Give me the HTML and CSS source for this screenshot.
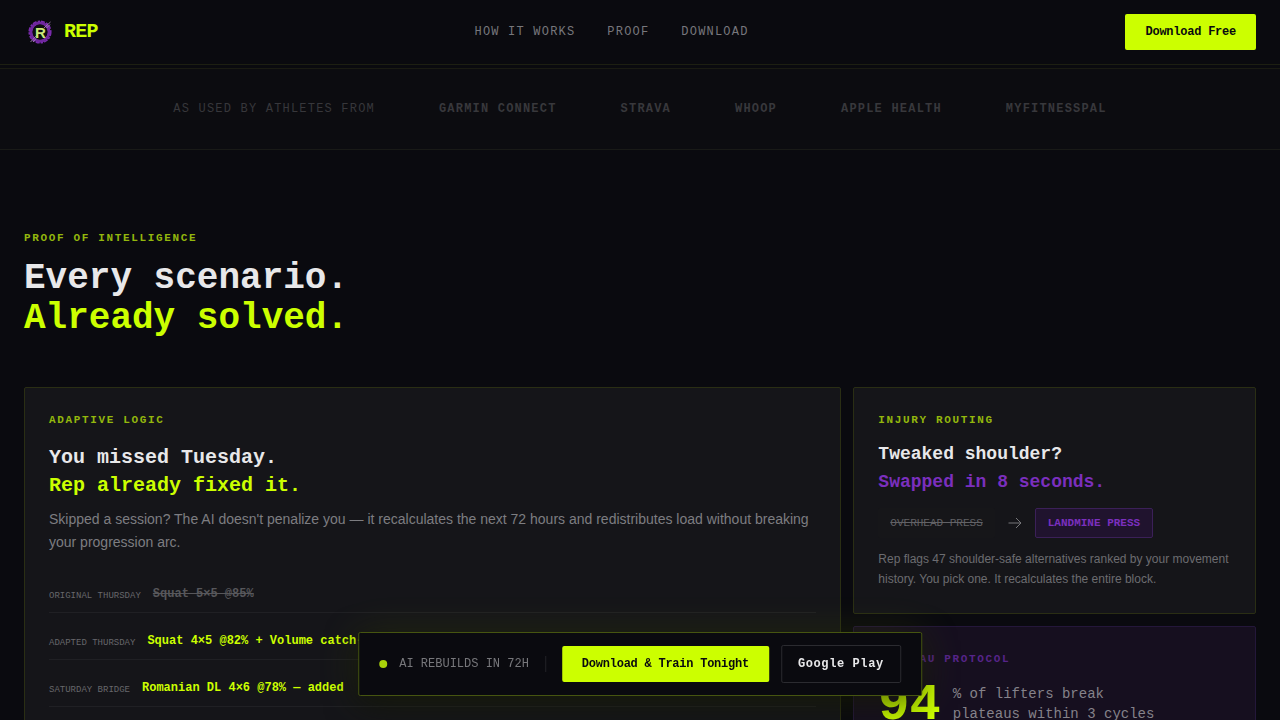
FILE: index.html
```html
<!DOCTYPE html>
<html lang="en">
<head>
<meta charset="utf-8">
<meta name="viewport" content="width=device-width, initial-scale=1">
<title>REP</title>
<link rel="stylesheet" href="styles.css">
</head>
<body>
<header class="site-header">
  <a class="brand" href="#">
    <svg class="brand-mark" viewBox="0 0 32 32" aria-hidden="true">
      <circle cx="16" cy="16" r="9" fill="none" stroke="#6f279e" stroke-width="3"/>
      <circle cx="16" cy="16" r="10.8" fill="none" stroke="#7a2bad" stroke-width="1.6" stroke-dasharray="4 1.2 2.4 1"/>
      <circle cx="16" cy="16" r="7.4" fill="#0d0d10"/>
      <path d="M6.5 26 L12.5 19.5 M20 12 L26.5 6 M9 26 L12 22.5 M22.5 12 L26 8.5" stroke="#b994c8" stroke-width="0.8"/>
      <text class="brand-letter" x="16.5" y="21.5" text-anchor="middle">R</text>
    </svg>
    <span class="brand-name">REP</span>
  </a>
  <nav class="site-nav">
    <a href="#how">HOW IT WORKS</a>
    <a href="#proof">PROOF</a>
    <a href="#download">DOWNLOAD</a>
  </nav>
  <button class="button button-primary" type="button">Download Free</button>
</header>

<main>
  <section class="partners">
    <span class="partners-label">AS USED BY ATHLETES FROM</span>
    <span>GARMIN CONNECT</span>
    <span>STRAVA</span>
    <span>WHOOP</span>
    <span>APPLE HEALTH</span>
    <span>MYFITNESSPAL</span>
  </section>

  <section class="proof" id="proof">
    <p class="eyebrow">PROOF OF INTELLIGENCE</p>
    <h2 class="headline">Every scenario.<br><span class="lime">Already solved.</span></h2>

    <div class="cards">
      <article class="card card-wide">
        <p class="eyebrow">ADAPTIVE LOGIC</p>
        <h3 class="card-title card-title-large">You missed Tuesday.<br><span class="lime">Rep already fixed it.</span></h3>
        <p class="card-text card-text-large">Skipped a session? The AI doesn't penalize you — it recalculates the next 72 hours and redistributes load without breaking your progression arc.</p>
        <dl class="plan">
          <div class="plan-row"><dt>ORIGINAL THURSDAY</dt><dd class="plan-old">Squat 5×5 @85%</dd></div>
          <div class="plan-row"><dt>ADAPTED THURSDAY</dt><dd>Squat 4×5 @82% + Volume catch-up</dd></div>
          <div class="plan-row"><dt>SATURDAY BRIDGE</dt><dd>Romanian DL 4×6 @78% — added</dd></div>
        </dl>
      </article>

      <article class="card">
        <p class="eyebrow">INJURY ROUTING</p>
        <h3 class="card-title">Tweaked shoulder?<br><span class="violet">Swapped in 8 seconds.</span></h3>
        <div class="swap">
          <span class="chip chip-old">OVERHEAD PRESS</span>
          <svg class="arrow" viewBox="0 0 16 16" aria-hidden="true"><path d="M1.5 8H14M9 3l5 5-5 5"/></svg>
          <span class="chip chip-new">LANDMINE PRESS</span>
        </div>
        <p class="card-text">Rep flags 47 shoulder-safe alternatives ranked by your movement history. You pick one. It recalculates the entire block.</p>
      </article>

      <article class="card card-violet">
        <p class="eyebrow eyebrow-violet">PLATEAU PROTOCOL</p>
        <div class="stat">
          <span class="stat-value">94</span>
          <p class="stat-text">% of lifters break plateaus within 3 cycles</p>
        </div>
      </article>
    </div>
  </section>
</main>

<aside class="cta-bar">
  <p class="cta-status">AI REBUILDS IN 72H</p>
  <button class="button button-primary" type="button">Download &amp; Train Tonight</button>
  <button class="button button-outline" type="button">Google Play</button>
</aside>
</body>
</html>
```

FILE: styles.css
```css
:root {
  --bg: #0a0a0f;
  --panel: #151519;
  --lime: #ccff00;
  --violet: #7b2fbe;
  --text: #e8e8ea;
  --mono: "Liberation Mono", monospace;
  --sans: "Liberation Sans", sans-serif;
}

* { box-sizing: border-box; }

body, p, h2, h3, dl, dd { margin: 0; }

body {
  background: var(--bg);
  color: var(--text);
  font-family: var(--mono);
  font-size: 12px;
  line-height: 16px;
}

.lime { color: var(--lime); }
.violet { color: var(--violet); }

.site-header {
  position: sticky;
  top: 0;
  z-index: 2;
  display: flex;
  align-items: center;
  justify-content: space-between;
  padding: 14px 24px;
  background: var(--bg);
  border-bottom: 1px solid #1d1f12;
}

.brand {
  display: flex;
  align-items: center;
  gap: 8px;
  color: var(--lime);
  text-decoration: none;
}

.brand-mark { width: 32px; height: 32px; }
.brand-letter { font: 700 15px var(--sans); fill: #cce87a; }

.brand-name {
  font-size: 20px;
  font-weight: 700;
  line-height: 28px;
  letter-spacing: -0.04em;
}

.site-nav { display: flex; gap: 32px; }

.site-nav a {
  color: #77777c;
  letter-spacing: 0.1em;
  text-decoration: none;
}

.button {
  padding: 10px 20px;
  border: 0;
  border-radius: 2px;
  font: 700 12px/16px var(--mono);
}

.button-primary {
  background: var(--lime);
  color: var(--bg);
  letter-spacing: -0.02em;
}

.button-outline {
  padding: 10px 16px;
  border: 1px solid #2b2b30;
  background: transparent;
  color: var(--text);
  letter-spacing: 0.05em;
}

.partners {
  display: flex;
  justify-content: center;
  gap: 64px;
  margin-top: 3px;
  padding: 32px 24px;
  background: #0c0c10;
  border-top: 1px solid #1a1b12;
  border-bottom: 1px solid #191a17;
  color: #38383c;
  font-weight: 700;
  letter-spacing: 0.1em;
}

.partners-label { color: #37373b; font-weight: 400; }

.proof { padding: 80px 24px; }

.eyebrow {
  color: #93b70d;
  font-size: 11px;
  font-weight: 700;
  letter-spacing: 0.15em;
}

.eyebrow-violet { color: #56248a; }

.headline {
  margin: 13px 0 48px;
  font-size: 36px;
  line-height: 40px;
}

.cards {
  display: grid;
  grid-template-columns: repeat(3, 1fr);
  gap: 12px;
}

.card {
  padding: 24px;
  background: var(--panel);
  border: 1px solid #2a2e14;
  border-radius: 2px;
}

.card-wide { grid-column: span 2; grid-row: span 2; }
.card-violet { background: #160f1f; border-color: #24173a; }

.card-title {
  margin: 12px 0;
  font-size: 18px;
  line-height: 28px;
}

.card-title-large {
  margin: 16px 0 8px;
  font-size: 20px;
}

.card-text {
  color: #6c6c70;
  font-family: var(--sans);
  line-height: 20px;
}

.card-text-large {
  margin-bottom: 12px;
  color: #7d7d81;
  font-size: 14px;
  line-height: 23px;
}

.plan-row {
  display: flex;
  align-items: flex-end;
  gap: 12px;
  padding: 19px 0 9px;
  border-bottom: 1px solid #202024;
  line-height: 18px;
}

.plan-row dt { color: #67676b; font-size: 9px; line-height: 14px; }
.plan-row dd { color: var(--lime); font-weight: 700; }
.plan-row .plan-old { color: #57575b; text-decoration: line-through; }

.swap {
  display: flex;
  align-items: center;
  gap: 12px;
  margin-bottom: 11px;
}

.chip {
  padding: 7px 12px;
  border-radius: 2px;
  font-size: 11px;
}

.chip-old {
  background: #161619;
  color: #626266;
  text-decoration: line-through;
}

.chip-new {
  padding: 6px 12px;
  background: #20132e;
  border: 1px solid #3b2058;
  color: var(--violet);
  font-weight: 700;
}

.arrow {
  width: 16px;
  height: 16px;
  fill: none;
  stroke: #77777b;
}

.stat {
  display: flex;
  gap: 12px;
  margin-top: 13px;
}

.stat-value {
  color: var(--lime);
  font-size: 52px;
  font-weight: 700;
  line-height: 52px;
}

.stat-text {
  max-width: 220px;
  padding-top: 4px;
  color: #85828a;
  font-size: 14px;
  line-height: 20px;
}

/* Floating download bar, pinned over the scrolling page */
.cta-bar {
  position: fixed;
  bottom: 24px;
  left: 50%;
  z-index: 3;
  display: flex;
  align-items: center;
  gap: 12px;
  padding: 12px 20px;
  transform: translateX(-50%);
  background: var(--bg);
  border: 1px solid #465510;
  border-radius: 2px;
  box-shadow: 0 0 40px rgba(204, 255, 0, 0.1), 0 8px 32px rgba(0, 0, 0, 0.6);
  white-space: nowrap;
}

.cta-status {
  display: flex;
  align-items: center;
  color: #77777b;
}

.cta-status::before {
  width: 8px;
  height: 8px;
  margin-right: 12px;
  border-radius: 50%;
  background: #a9d30a;
  content: "";
}

.cta-status::after {
  width: 1px;
  height: 16px;
  margin: 0 4px 0 16px;
  background: #222227;
  content: "";
}
```
